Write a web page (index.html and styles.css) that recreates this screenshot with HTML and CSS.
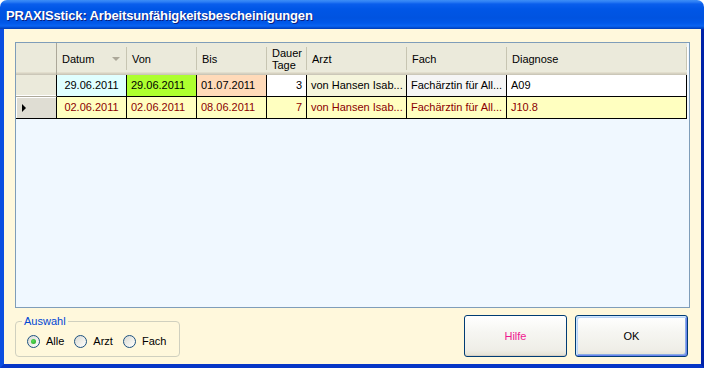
FILE: index.html
```html
<!DOCTYPE html>
<html lang="de">
<head>
    <meta charset="UTF-8">
    <title>PRAXISstick: Arbeitsunfähigkeitsbescheinigungen</title>
    <link rel="stylesheet" href="styles.css">
</head>
<body>

    <div class="window">
        <div class="titlebar">
            <span class="title">PRAXISstick: Arbeitsunfähigkeitsbescheinigungen</span>
        </div>

        <div class="frame">
            <div class="client">

                <div class="grid-view">
                    <div class="row head">
                        <div class="corner"></div>
                        <div class="hcell sorted">Datum<span class="sort-glyph"></span></div>
                        <div class="hcell">Von</div>
                        <div class="hcell">Bis</div>
                        <div class="hcell two-line">Dauer<br>Tage</div>
                        <div class="hcell">Arzt</div>
                        <div class="hcell">Fach</div>
                        <div class="hcell">Diagnose</div>
                    </div>

                    <div class="row data">
                        <div class="rowhead"></div>
                        <div class="cell center bg-cyan">29.06.2011</div>
                        <div class="cell bg-green">29.06.2011</div>
                        <div class="cell bg-peach">01.07.2011</div>
                        <div class="cell right">3</div>
                        <div class="cell bg-beige">von Hansen Isab...</div>
                        <div class="cell bg-smoke">Fachärztin für All...</div>
                        <div class="cell">A09</div>
                    </div>

                    <div class="row data current">
                        <div class="rowhead"><span class="pointer"></span></div>
                        <div class="cell center">02.06.2011</div>
                        <div class="cell">02.06.2011</div>
                        <div class="cell">08.06.2011</div>
                        <div class="cell right">7</div>
                        <div class="cell">von Hansen Isab...</div>
                        <div class="cell">Fachärztin für All...</div>
                        <div class="cell">J10.8</div>
                    </div>
                </div>

                <div class="bottom">
                    <fieldset class="choice">
                        <legend>Auswahl</legend>
                        <div class="options">
                            <label class="opt"><span class="radio checked"></span>Alle</label>
                            <label class="opt"><span class="radio"></span>Arzt</label>
                            <label class="opt"><span class="radio"></span>Fach</label>
                        </div>
                    </fieldset>

                    <div class="buttons">
                        <button class="btn help">Hilfe</button>
                        <button class="btn default">OK</button>
                    </div>
                </div>

            </div>
        </div>
    </div>

</body>
</html>
```

FILE: styles.css
```css
body {
    margin: 0;
    background-color: #fff;
    font-family: "Liberation Sans", Arial, sans-serif;
    font-size: 11px;
    color: #000;
}
.window {
    width: 704px;
    height: 368px;
    display: flex;
    flex-direction: column;
    border-radius: 7px 7px 0 0;
    overflow: hidden;
}
.titlebar {
    height: 29px;
    box-sizing: border-box;
    padding: 2px 0 0 6px;
    background: linear-gradient(to bottom,
        #3d8ef6 0, #2a7cf4 2px, #0a5eec 4px, #0056e6 9px,
        #0053e0 18px, #0058ea 23px, #0a64f2 26px, #0048cc 28px, #003cb4 29px);
}
.title {
    display: block;
    line-height: 27px;
    font-size: 13px;
    font-weight: bold;
    letter-spacing: -0.15px;
    color: #fff;
    text-shadow: 1px 1px 0 #0a1e80;
}
.frame {
    flex: 1;
    display: flex;
    border-left: 4px solid #0b4ee0;
    border-right: 3px solid #0022a8;
    border-bottom: 4px solid #0636c6;
}
.client {
    flex: 1;
    display: flex;
    flex-direction: column;
    background-color: #fff8dc;
    padding: 13px 11px 7px 11px;
}

/* data grid */
.grid-view {
    height: 266px;
    box-sizing: border-box;
    border: 1px solid #7f9db9;
    background-color: #f0f8ff;
}
.row {
    display: grid;
    grid-template-columns: 41px 70px 70px 70px 40px 100px 100px 180px;
}
.head > div {
    height: 32px;
    box-sizing: border-box;
    background-color: #ebeadb;
    box-shadow: inset 0 -1px #cbc7b8, inset 0 -2px #d6d2c2, inset 0 -3px #e2decd;
}
.corner {
    border-right: 1px solid #aca899;
}
.hcell {
    position: relative;
    display: flex;
    align-items: center;
    padding-left: 5px;
    padding-bottom: 1px;
}
.hcell::after {
    content: "";
    position: absolute;
    right: 0;
    top: 4px;
    bottom: 5px;
    width: 1px;
    background-color: #c7c5b2;
    box-shadow: 1px 0 #fff;
}
.hcell.sorted {
    justify-content: space-between;
    padding-right: 7px;
}
.sort-glyph {
    border-left: 4px solid transparent;
    border-right: 4px solid transparent;
    border-top: 4px solid #aca899;
    margin-top: 1px;
}
.hcell.two-line {
    line-height: 12px;
}
.cell {
    height: 22px;
    box-sizing: border-box;
    border-right: 1px solid #000;
    border-bottom: 1px solid #000;
    padding: 0 4px;
    line-height: 21px;
    white-space: nowrap;
    overflow: hidden;
    background-color: #fff;
}
.cell.center {
    text-align: center;
}
.cell.right {
    text-align: right;
}
.bg-cyan { background-color: #e0ffff; }
.bg-green { background-color: #adff2f; }
.bg-peach { background-color: #ffdab9; }
.bg-beige { background-color: #f5f5dc; }
.bg-smoke { background-color: #f5f5f5; }

.current .cell {
    background-color: #ffffc0;
    color: #8b0000;
}
.rowhead {
    height: 22px;
    box-sizing: border-box;
    display: flex;
    align-items: center;
    background-color: #ebeadb;
    border-right: 1px solid #000;
    border-bottom: 1px solid #aca899;
    box-shadow: inset 0 -1px #fff;
}
.current .rowhead {
    background-color: #dfddd3;
    border-bottom: 1px solid #000;
    box-shadow: inset 1px 1px #fff;
}
.pointer {
    margin-left: 6px;
    border-top: 4px solid transparent;
    border-bottom: 4px solid transparent;
    border-left: 4px solid #000;
}

/* bottom area */
.bottom {
    margin-top: 7px;
    height: 42px;
    display: flex;
    justify-content: space-between;
}
.choice {
    margin: 0;
    width: 165px;
    height: 42px;
    box-sizing: border-box;
    border: 1px solid #d0d0bf;
    border-radius: 4px;
    padding: 0 6px;
}
.choice legend {
    padding: 0 2px;
    line-height: 12px;
    color: #0046d5;
}
.options {
    display: flex;
    gap: 10px;
    margin: 8px 0 0 5px;
}
.opt {
    display: flex;
    align-items: center;
    gap: 6px;
    line-height: 13px;
}
.radio {
    width: 13px;
    height: 13px;
    box-sizing: border-box;
    border-radius: 50%;
    border: 1px solid #1c5180;
    background: linear-gradient(135deg, #d8d8d2 0%, #efefea 55%, #fff 100%);
    display: flex;
    align-items: center;
    justify-content: center;
}
.radio.checked::before {
    content: "";
    width: 5px;
    height: 5px;
    border-radius: 50%;
    background: radial-gradient(circle at 40% 40%, #5ade5a, #21a121);
}
.buttons {
    display: flex;
    gap: 8px;
    margin-right: 2px;
}
.btn {
    height: 42px;
    border: 1px solid #003c74;
    border-radius: 3px;
    background: linear-gradient(to bottom, #fff 0, #f6f6f2 40%, #efeee7 85%, #e3e0d2 100%);
    box-shadow: inset 0 -1px #d6d0c5;
    font-family: "Liberation Sans", Arial, sans-serif;
    font-size: 11px;
    padding: 0;
    cursor: pointer;
}
.btn.help {
    width: 103px;
    color: #f01890;
}
.btn.default {
    width: 113px;
    color: #000;
    box-shadow: inset 1px 1px #cee7ff, inset -1px -1px #6982ee, inset 2px 2px #bcd4f6, inset -2px -2px #89ade4;
}
```
